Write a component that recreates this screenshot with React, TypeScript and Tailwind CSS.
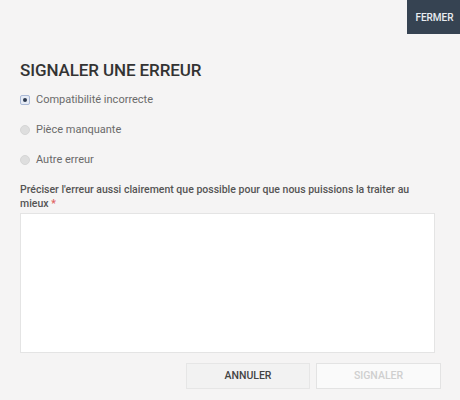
import React from "react";

export default function App() {
  return (
    <div
      className="w-[460px] h-[400px] bg-[#f5f4f4] overflow-hidden flex flex-col"
      style={{ fontFamily: "Roboto, 'Liberation Sans', sans-serif" }}
    >
      <div className="flex justify-end">
        <button className="h-[34px] w-[53px] bg-[#364352] text-[#e8ecf0] text-[10px] font-medium flex items-center justify-center pl-[2px]">
          FERMER
        </button>
      </div>
      <div className="pl-[20px] pr-[20px]">
        <h1 className="mt-[26px] text-[17px] leading-[20px] font-medium text-[#333] tracking-[-0.1px]">
          SIGNALER UNE ERREUR
        </h1>
        <div className="mt-[14px] flex flex-col gap-[18px] text-[11px] text-[#6a6a6a]">
          <div className="flex items-center h-[12px]">
            <span className="w-[10px] h-[10px] rounded-[2px] border border-[#aab9d6] bg-[#e6ebf5] flex items-center justify-center">
              <span className="w-[4px] h-[4px] rounded-full bg-[#2d3a4e]" />
            </span>
            <span className="ml-[6px]">Compatibilité incorrecte</span>
          </div>
          <div className="flex items-center h-[12px]">
            <span className="w-[10px] h-[10px] rounded-full bg-[#dedede] border border-[#d6d6d6]" />
            <span className="ml-[6px]">Pièce manquante</span>
          </div>
          <div className="flex items-center h-[12px]">
            <span className="w-[10px] h-[10px] rounded-full bg-[#dedede] border border-[#d6d6d6]" />
            <span className="ml-[6px]">Autre erreur</span>
          </div>
        </div>
        <p className="mt-[17px] text-[10.5px] leading-[14px] font-medium text-[#555] w-[410px]">
          Préciser l'erreur aussi clairement que possible pour que nous puissions la traiter au mieux{" "}
          <span className="text-[#e06060]">*</span>
        </p>
        <div className="mt-[2px] w-[415px] h-[140px] bg-white border border-[#e4e4e4]" />
        <div className="mt-[10px] flex justify-end gap-[6px] w-[421px]">
          <button className="w-[124px] h-[26px] bg-[#f2f2f2] border border-[#e6e6e6] text-[10.5px] font-medium text-[#444]">
            ANNULER
          </button>
          <button className="w-[125px] h-[26px] bg-[#fafafa] border border-[#e3e3e3] text-[10.5px] font-medium text-[#cfcfcf]">
            SIGNALER
          </button>
        </div>
      </div>
    </div>
  );
}
